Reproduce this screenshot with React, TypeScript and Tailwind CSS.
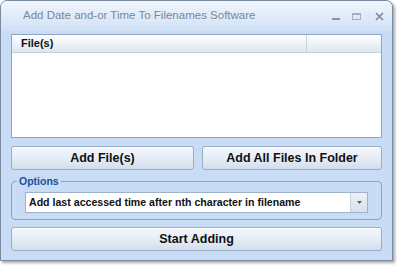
import React from "react";

const font = "font-['Liberation_Sans','Arial',sans-serif]";

function Btn({ label, className = "" }: { label: string; className?: string }) {
  return (
    <button
      className={
        "flex items-center justify-center rounded-[3px] border border-[#9aadc6] bg-gradient-to-b from-[#f4f7fb] via-[#e6edf6] to-[#d3deec] text-[12.5px] font-bold text-[#111] shadow-[inset_0_1px_0_#fff] " +
        className
      }
    >
      {label}
    </button>
  );
}

export default function App() {
  return (
    <div className={"w-[400px] h-[268px] bg-white " + font}>
      <div className="relative flex flex-col w-[393px] h-[261px] rounded-t-[7px] border border-[#7a8ba0] bg-[#c8dcf6] shadow-[2px_2px_3px_rgba(0,0,0,0.35)]">
        {/* title bar */}
        <div className="flex items-center h-[30px] rounded-t-[6px] bg-gradient-to-b from-[#f0f5fc] to-[#d0e1f6] pl-[22px] pr-[8px]">
          <span className="flex-1 text-[11.5px] text-[#7b8797]">
            Add Date and-or Time To Filenames Software
          </span>
          <div className="flex items-center gap-[12px]">
            <span className="w-[8px] h-[2px] bg-[#8a95a5] mt-[5px]" />
            <span className="w-[9px] h-[7px] border border-[#a5afbd] border-t-2" />
            <svg width="9" height="9" viewBox="0 0 9 9" className="ml-[2px]">
              <path d="M1 1 L8 8 M8 1 L1 8" stroke="#7d8899" strokeWidth="1.6" />
            </svg>
          </div>
        </div>

        <div className="flex flex-col px-[10px] pt-[3px]">
          {/* file list */}
          <div className="flex flex-col h-[104px] border border-[#8ea4c0] bg-white">
            <div className="flex h-[18px] bg-gradient-to-b from-[#ffffff] to-[#dde6f2] border-b border-[#c3d0e0] text-[11px] font-bold text-[#111]">
              <div className="w-[295px] pl-[9px] flex items-center border-r border-[#c9d3df]">File(s)</div>
              <div className="flex-1" />
            </div>
          </div>

          {/* buttons */}
          <div className="flex gap-[8px] mt-[8px]">
            <Btn label="Add File(s)" className="w-[183px] h-[24px]" />
            <Btn label="Add All Files In Folder" className="flex-1 h-[24px]" />
          </div>

          {/* options */}
          <div className="relative mt-[11px] h-[39px] rounded-[4px] border border-[#8aa2c2] pt-[10px] pl-[13px] pr-[13px]">
            <span className="absolute -top-[8px] left-[5px] px-[2px] bg-[#c8dcf6] text-[10.5px] font-bold text-[#1d4f96]">
              Options
            </span>
            <div className="flex h-[21px] border border-[#9fb2cb] bg-white">
              <div className="flex-1 flex items-center pl-[3px] text-[10.6px] font-bold text-[#111] whitespace-nowrap overflow-hidden">
                Add last accessed time after nth character in filename
              </div>
              <div className="w-[17px] flex items-center justify-center bg-gradient-to-b from-[#eef2f7] to-[#d9e1ec] border-l border-[#c7d2e0]">
                <svg width="5" height="3" viewBox="0 0 5 3">
                  <path d="M0 0 H5 L2.5 3 Z" fill="#55606e" />
                </svg>
              </div>
            </div>
          </div>

          <Btn label="Start Adding" className="mt-[7px] h-[24px] w-full" />
        </div>
      </div>
    </div>
  );
}
